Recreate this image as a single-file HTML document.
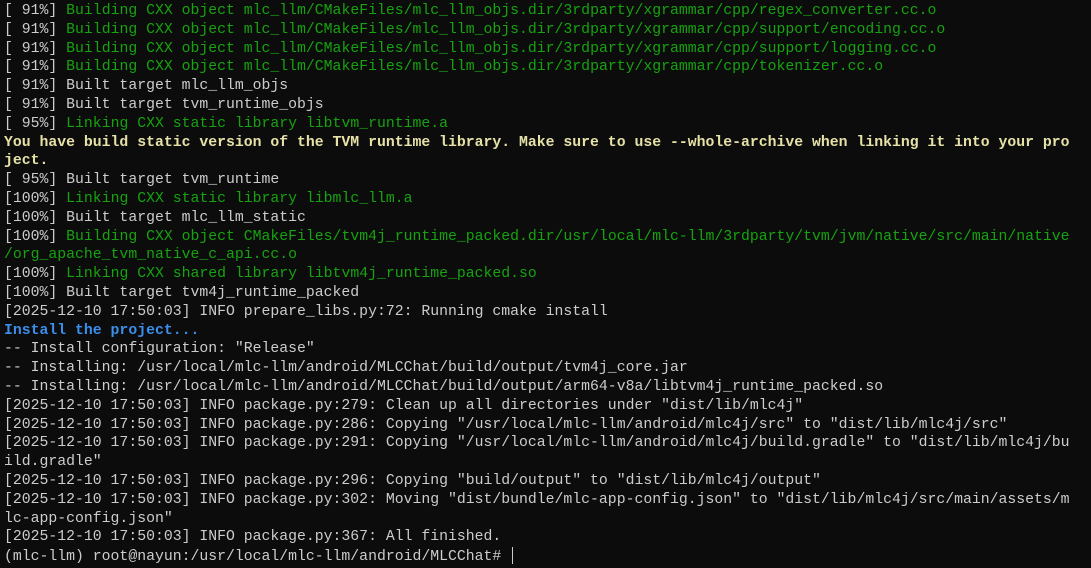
<!DOCTYPE html>
<html><head><meta charset="utf-8"><style>
html,body{margin:0;padding:0;background:#0c0c0c;width:1091px;height:568px;overflow:hidden}
pre{margin:0;padding:2px 0 0 4px;font-family:"Liberation Mono","DejaVu Sans Mono",monospace;font-size:14.8px;line-height:18.8px;color:#cccccc;white-space:pre}
.g{color:#16a30f}.b{color:#3b8eea;font-weight:bold}.y{color:#e6e1a6;font-weight:bold}
.c{display:inline-block;width:1px;height:17px;background:#ccc;vertical-align:-4px;margin-left:2px}
</style></head><body><pre>[ 91%] <span class="g">Building CXX object mlc_llm/CMakeFiles/mlc_llm_objs.dir/3rdparty/xgrammar/cpp/regex_converter.cc.o</span>
[ 91%] <span class="g">Building CXX object mlc_llm/CMakeFiles/mlc_llm_objs.dir/3rdparty/xgrammar/cpp/support/encoding.cc.o</span>
[ 91%] <span class="g">Building CXX object mlc_llm/CMakeFiles/mlc_llm_objs.dir/3rdparty/xgrammar/cpp/support/logging.cc.o</span>
[ 91%] <span class="g">Building CXX object mlc_llm/CMakeFiles/mlc_llm_objs.dir/3rdparty/xgrammar/cpp/tokenizer.cc.o</span>
[ 91%] Built target mlc_llm_objs
[ 91%] Built target tvm_runtime_objs
[ 95%] <span class="g">Linking CXX static library libtvm_runtime.a</span>
<span class="y">You have build static version of the TVM runtime library. Make sure to use --whole-archive when linking it into your pro
ject.</span>
[ 95%] Built target tvm_runtime
[100%] <span class="g">Linking CXX static library libmlc_llm.a</span>
[100%] Built target mlc_llm_static
[100%] <span class="g">Building CXX object CMakeFiles/tvm4j_runtime_packed.dir/usr/local/mlc-llm/3rdparty/tvm/jvm/native/src/main/native
/org_apache_tvm_native_c_api.cc.o</span>
[100%] <span class="g">Linking CXX shared library libtvm4j_runtime_packed.so</span>
[100%] Built target tvm4j_runtime_packed
[2025-12-10 17:50:03] INFO prepare_libs.py:72: Running cmake install
<span class="b">Install the project...</span>
-- Install configuration: "Release"
-- Installing: /usr/local/mlc-llm/android/MLCChat/build/output/tvm4j_core.jar
-- Installing: /usr/local/mlc-llm/android/MLCChat/build/output/arm64-v8a/libtvm4j_runtime_packed.so
[2025-12-10 17:50:03] INFO package.py:279: Clean up all directories under "dist/lib/mlc4j"
[2025-12-10 17:50:03] INFO package.py:286: Copying "/usr/local/mlc-llm/android/mlc4j/src" to "dist/lib/mlc4j/src"
[2025-12-10 17:50:03] INFO package.py:291: Copying "/usr/local/mlc-llm/android/mlc4j/build.gradle" to "dist/lib/mlc4j/bu
ild.gradle"
[2025-12-10 17:50:03] INFO package.py:296: Copying "build/output" to "dist/lib/mlc4j/output"
[2025-12-10 17:50:03] INFO package.py:302: Moving "dist/bundle/mlc-app-config.json" to "dist/lib/mlc4j/src/main/assets/m
lc-app-config.json"
[2025-12-10 17:50:03] INFO package.py:367: All finished.
(mlc-llm) root@nayun:/usr/local/mlc-llm/android/MLCChat# <span class="c"></span></pre></body></html>
